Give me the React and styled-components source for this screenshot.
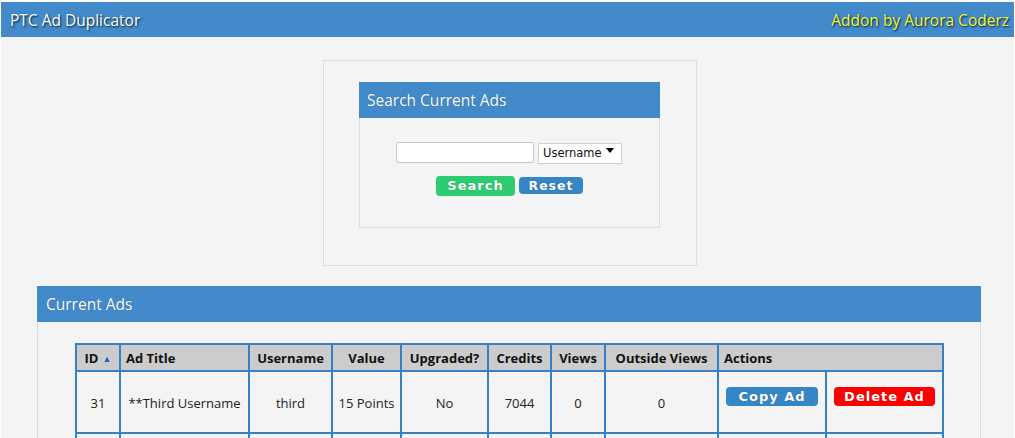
import React from "react";
import styled, { createGlobalStyle } from "styled-components";

const Global = createGlobalStyle`
  html, body { margin: 0; padding: 0; background: #ffffff; }
  body { font-family: "Open Sans", "Noto Sans", sans-serif; color: #222; }
  * { box-sizing: border-box; }
`;

const Page = styled.div`
  margin: 2px 1px 0 1px;
  background: #f4f4f4;
  min-height: 436px;
  overflow: hidden;
`;

const TopBar = styled.header`
  height: 35px;
  background: #428aca;
  display: flex;
  align-items: center;
  justify-content: space-between;
  padding: 0 5px 0 9px;
  font-size: 15.5px;
  color: #fff;
  text-shadow: 1px 1px 2px rgba(0, 0, 0, 0.85);
`;

const Credit = styled.span`
  color: #f2f53a;
`;

const SearchWrap = styled.section`
  width: 374px;
  height: 206px;
  margin: 23px 0 0 322px;
  border: 1px solid #dcdcdc;
  padding: 21px 0 0 35px;
`;

const Panel = styled.div`
  width: ${(p) => p.$w};
`;

const PanelHead = styled.div`
  height: 36px;
  background: #428aca;
  color: #fff;
  font-size: 15.5px;
  display: flex;
  align-items: center;
  padding-left: ${(p) => p.$pad || "8px"};
  text-shadow: 0 0 1px rgba(0, 0, 0, 0.4);
`;

const PanelBody = styled.div`
  border: 1px solid #dcdcdc;
  border-top: none;
  padding: ${(p) => p.$pad};
  height: ${(p) => p.$h || "auto"};
`;

const FormRow = styled.div`
  display: flex;
  justify-content: center;
  align-items: center;
  gap: 4px;
`;

const TextInput = styled.input`
  width: 138px;
  height: 21px;
  border: 1px solid #c8c8c8;
  border-radius: 2px;
  background: #fff;
  margin: 1px 0 0 -1px;
`;

const SelectBox = styled.span`
  position: relative;
  display: inline-block;
  &::after {
    content: "";
    position: absolute;
    right: 8px;
    top: 8px;
    border-left: 4px solid transparent;
    border-right: 4px solid transparent;
    border-top: 5px solid #000;
    pointer-events: none;
  }
`;

const Select = styled.select`
  appearance: none;
  -webkit-appearance: none;
  width: 84px;
  height: 21px;
  border: 1px solid #d0d0d0;
  background: #fff;
  font-family: "DejaVu Sans", Verdana, sans-serif;
  font-size: 11.5px;
  padding: 0 0 0 4px;
  color: #111;
  border-radius: 0;
`;

const Btn = styled.button`
  border: none;
  border-radius: 4px;
  background: ${(p) => p.$bg};
  color: #fff;
  font-family: "DejaVu Sans", Verdana, sans-serif;
  font-weight: bold;
  font-size: ${(p) => p.$fs || "12.5px"};
  letter-spacing: 1px;
  width: ${(p) => p.$w};
  height: ${(p) => p.$h};
  padding: 0;
  text-shadow: 0 0 1px rgba(0, 0, 0, 0.4);
  cursor: pointer;
`;

const Buttons = styled(FormRow)`
  margin-top: 12px;
`;

const AdsPanel = styled.section`
  width: 944px;
  margin: 20px 0 0 36px;
`;

const Table = styled.table`
  border-collapse: collapse;
  table-layout: fixed;
  width: 867px;
  border: 2px solid #3581c2;
  font-size: 13px;
`;

const Th = styled.th`
  background: #cccccc;
  border: 2px solid #3581c2;
  height: 27px;
  padding: 0 0 0 ${(p) => (p.$left ? "5px" : "0")};
  text-align: ${(p) => (p.$left ? "left" : "center")};
  font-weight: bold;
  color: #111;
  white-space: nowrap;
`;

const Td = styled.td`
  border: 2px solid #3581c2;
  height: 62px;
  text-align: center;
  padding: 2px 0 0;
  color: #222;
  white-space: nowrap;
`;

const ActionTd = styled(Td)`
  vertical-align: top;
  padding-top: 15px;
`;

const SortArrow = styled.span`
  color: #1c5fd6;
  font-size: 9px;
  margin-left: 4px;
  vertical-align: 1px;
`;

const cols = [44, 129, 83, 69, 87, 63, 54, 113, 108, 117];

const rows = [
  { id: 31, title: "**Third Username", user: "third", value: "15 Points", up: "No", credits: 7044, views: 0, outside: 0 },
  { id: 30, title: "**Second Username", user: "second", value: "15 Points", up: "No", credits: 5120, views: 0, outside: 0 },
];

export default function App() {
  return (
    <>
      <Global />
      <Page>
        <TopBar>
          <span>PTC Ad Duplicator</span>
          <Credit>Addon by Aurora Coderz</Credit>
        </TopBar>

        <SearchWrap>
          <Panel $w="301px">
            <PanelHead>Search Current Ads</PanelHead>
            <PanelBody $pad="22px 0 0 0" $h="110px">
              <FormRow>
                <TextInput type="text" />
                <SelectBox>
                  <Select defaultValue="username">
                    <option value="username">Username</option>
                    <option value="title">Ad Title</option>
                  </Select>
                </SelectBox>
              </FormRow>
              <Buttons>
                <Btn $bg="#2ecc71" $w="79px" $h="20px" $fs="13px">Search</Btn>
                <Btn $bg="#3586c4" $w="64px" $h="17px">Reset</Btn>
              </Buttons>
            </PanelBody>
          </Panel>
        </SearchWrap>

        <AdsPanel>
          <PanelHead $pad="9px">Current Ads</PanelHead>
          <PanelBody $pad="21px 38px 40px 37px">
            <Table>
              <colgroup>
                {cols.map((w, i) => (
                  <col key={i} style={{ width: w }} />
                ))}
              </colgroup>
              <thead>
                <tr>
                  <Th>
                    ID<SortArrow>▲</SortArrow>
                  </Th>
                  <Th $left>Ad Title</Th>
                  <Th>Username</Th>
                  <Th>Value</Th>
                  <Th>Upgraded?</Th>
                  <Th>Credits</Th>
                  <Th>Views</Th>
                  <Th>Outside Views</Th>
                  <Th $left colSpan={2}>Actions</Th>
                </tr>
              </thead>
              <tbody>
                {rows.map((r) => (
                  <tr key={r.id}>
                    <Td>{r.id}</Td>
                    <Td>{r.title}</Td>
                    <Td>{r.user}</Td>
                    <Td>{r.value}</Td>
                    <Td>{r.up}</Td>
                    <Td>{r.credits}</Td>
                    <Td>{r.views}</Td>
                    <Td>{r.outside}</Td>
                    <ActionTd>
                      <Btn $bg="#3586c4" $w="92px" $h="19px" $fs="13px">Copy Ad</Btn>
                    </ActionTd>
                    <ActionTd>
                      <Btn $bg="#ff0000" $w="101px" $h="19px" $fs="13px">Delete Ad</Btn>
                    </ActionTd>
                  </tr>
                ))}
              </tbody>
            </Table>
          </PanelBody>
        </AdsPanel>
      </Page>
    </>
  );
}
